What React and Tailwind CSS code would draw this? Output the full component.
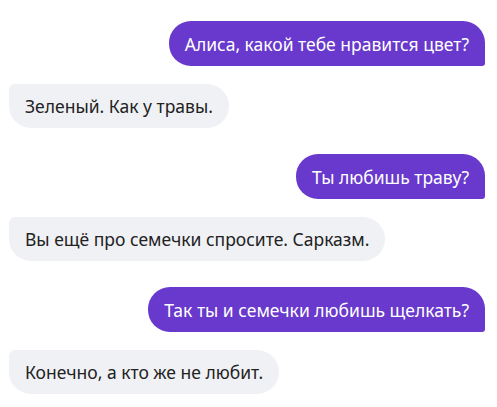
const messages = [
  { from: 'user', text: 'Алиса, какой тебе нравится цвет?' },
  { from: 'bot', text: 'Зеленый. Как у травы.' },
  { from: 'user', text: 'Ты любишь траву?' },
  { from: 'bot', text: 'Вы ещё про семечки спросите. Сарказм.' },
  { from: 'user', text: 'Так ты и семечки любишь щелкать?' },
  { from: 'bot', text: 'Конечно, а кто же не любит.' },
];

function Bubble({ from, text }) {
  if (from === 'user') {
    return (
      <div className="flex justify-end mb-[18px]">
        <div className="h-[45px] flex items-center px-4 rounded-[22px] rounded-br-[3px] bg-[#6839cc] text-white">
          {text}
        </div>
      </div>
    );
  }
  return (
    <div className="flex justify-start mb-[26px]">
      <div className="h-[44px] flex items-center px-4 rounded-[22px] rounded-tl-[6px] bg-[#f0f1f5] text-[#222222]">
        {text}
      </div>
    </div>
  );
}

export default function App() {
  return (
    <div
      className="w-[497px] h-[407px] bg-white pt-[21px] pl-[9px] pr-[12px] text-[17.5px] leading-6 overflow-hidden"
      style={{ fontFamily: '"Noto Sans", sans-serif' }}
    >
      {messages.map((m, i) => (
        <Bubble key={i} {...m} />
      ))}
    </div>
  );
}
